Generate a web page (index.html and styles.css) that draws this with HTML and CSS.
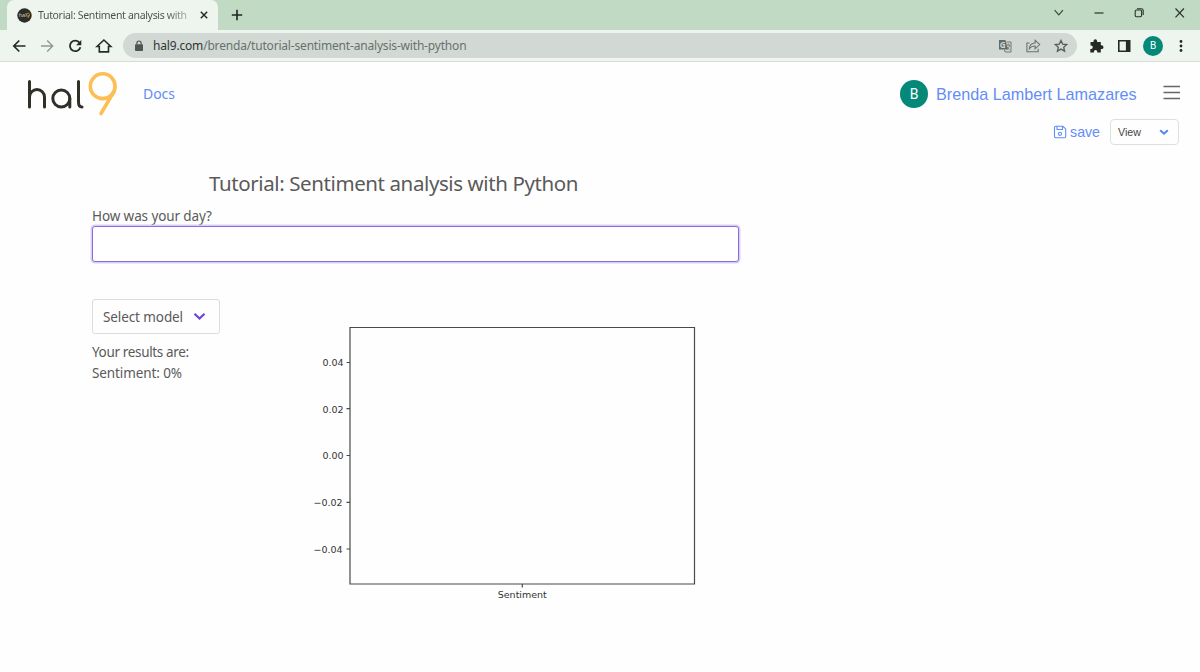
FILE: index.html
```html
<!DOCTYPE html>
<html lang="en">
<head>
<meta charset="utf-8">
<title>Tutorial: Sentiment analysis with Python</title>
<link rel="stylesheet" href="styles.css">
</head>
<body>
<div class="tabbar">
  <div class="tab">
    <svg class="favicon" width="15" height="15" viewBox="0 0 15 15"><circle cx="7.5" cy="7.5" r="7.2" fill="#2d2d26"/><text x="1.7" y="9.3" font-size="5.5" fill="#c8c8c0">hal</text><circle cx="11" cy="6.7" r="1.5" fill="none" stroke="#c99a45" stroke-width=".8"/><path d="M12.4 7.2 11 10" stroke="#c99a45" stroke-width=".8"/></svg>
    <span class="tab-title">Tutorial: Sentiment analysis with</span>
    <svg class="tab-close" width="8" height="8" viewBox="0 0 8 8"><path d="M.8.8 7.2 7.2M7.2.8.8 7.2" stroke="#262b28" stroke-width="1.5"/></svg>
  </div>
  <svg class="newtab" width="12" height="12" viewBox="0 0 12 12"><path d="M6 .8v10.4M.8 6h10.4" stroke="#202622" stroke-width="1.6"/></svg>
  <div class="window">
    <svg width="40" height="26" viewBox="0 0 40 26"><path d="m14.600 10.200 4.200 4.600 4.200-4.600" fill="none" stroke="#39453c" stroke-width="1.200"/></svg>
    <svg width="40" height="26" viewBox="0 0 40 26"><path d="M14.500 13h9" stroke="#29332c" stroke-width="1.200"/></svg>
    <svg width="40" height="26" viewBox="0 0 40 26"><g fill="none" stroke="#29332c" stroke-width="1.100"><rect x="15.200" y="10" width="6.400" height="6.700" rx="1.200"/><path d="M17 8.700h4.300q1.900 0 1.900 1.900v4.300"/></g></svg>
    <svg width="40" height="26" viewBox="0 0 40 26"><path d="m15.500 8.500 8.400 8.800m0-8.800-8.400 8.800" stroke="#29332c" stroke-width="1.200"/></svg>
  </div>
</div>
<div class="toolbar">
  <svg width="28" height="28" viewBox="0 0 28 28"><path d="M20.500 14H9.300M14.300 8.500 8.800 14l5.500 5.500" fill="none" stroke="#252a27" stroke-width="1.700"/></svg>
  <svg width="28" height="28" viewBox="0 0 28 28"><path d="M8 14h11.200M14.200 8.500l5.500 5.500-5.500 5.500" fill="none" stroke="#909893" stroke-width="1.400"/></svg>
  <svg width="28" height="28" viewBox="0 0 28 28"><path d="M18.600 10.800A5.300 5.300 0 1 0 19.400 15.200" fill="none" stroke="#252a27" stroke-width="1.800"/><path d="M20.300 8v5.200h-5.200z" fill="#252a27"/></svg>
  <svg width="30" height="28" viewBox="0 0 30 28"><path d="M8 14.500 14.900 8l6.900 6.500H19.500v5.400h-9.200v-5.400z" fill="none" stroke="#252a27" stroke-width="1.600"/></svg>
  <div class="address">
    <svg width="10" height="12" viewBox="0 0 10 12"><rect x="1" y="4.300" width="8" height="6.700" rx=".8" fill="#505653"/><path d="M2.900 4.600V3.100a2.100 2.100 0 0 1 4.200 0v1.500" fill="none" stroke="#505653" stroke-width="1.200"/></svg>
    <span class="url"><b>hal9.com</b>/brenda/tutorial-sentiment-analysis-with-python</span>
    <div class="address-actions">
      <svg width="28" height="24" viewBox="0 0 28 24"><path d="M8 6h6.500l2.500 9.500H8z" fill="#626a66"/><text x="8.700" y="13.500" font-size="8" font-weight="700" fill="#d2d9d4">G</text><path d="M15.500 8H20v10h-5.700l-1-2.500" fill="none" stroke="#707874"/><path d="M15.200 11h4M17.300 9.500V11m1.500 0q-.5 2.500-3 4.500m0-3 2.800 3.500" fill="none" stroke="#707874" stroke-width=".9"/></svg>
      <svg width="28" height="24" viewBox="0 0 28 24"><path d="M10.500 9H7.900v8.800h11.300v-3" fill="none" stroke="#6b736e" stroke-width="1.100"/><path d="M10.300 14.700q.3-5.200 5.800-5.700V6.200l4.600 4.400-4.600 4.200V12q-3.800 0-5.800 2.700z" fill="none" stroke="#6b736e" stroke-width="1.100"/></svg>
      <svg width="28" height="24" viewBox="0 0 28 24"><path d="m14 6.400 1.700 3.700 4 .4-3 2.700.9 3.900-3.600-2-3.600 2 .9-3.900-3-2.700 4-.4z" fill="none" stroke="#555e59" stroke-width="1.300"/></svg>
    </div>
  </div>
  <svg class="puzzle" width="28" height="28" viewBox="0 0 28 28"><path d="M8.500 10H11.500V9a1.800 1.800 0 0 1 3.600 0v1h3.700v3.300h.8a1.900 1.900 0 0 1 0 3.800h-.8V20.500h-3.500v-.8a1.700 1.700 0 0 0-3.400 0v.8H8.300v-3.600h.8a1.700 1.700 0 0 0 0-3.400h-.6z" fill="#252a27"/></svg>
  <svg width="28" height="28" viewBox="0 0 28 28"><path d="M8 8h12.500v12H8zM9.600 9.600v8.800h6.300V9.600z" fill="#252a27" fill-rule="evenodd"/></svg>
  <div class="profile">B</div>
  <svg width="28" height="28" viewBox="0 0 28 28"><g fill="#252a27"><circle cx="14" cy="9.500" r="1.400"/><circle cx="14" cy="14" r="1.400"/><circle cx="14" cy="18.500" r="1.400"/></g></svg>
</div>
<header class="header">
  <svg class="logo" width="92" height="46" viewBox="0 0 92 46"><g fill="none" stroke="#302f28" stroke-width="3" stroke-linecap="round"><path d="M2.500 10.500v25.500M2.500 26a7.500 7.500 0 0 1 15 0v10"/><circle cx="34.300" cy="27.500" r="8.500"/><path d="M42.800 27.500V36M51.500 10.500v20.500q0 5 3.500 5"/></g><g fill="none" stroke="#fdbf55" stroke-width="3.600" stroke-linecap="round"><circle cx="75.700" cy="15.200" r="12.400"/><path d="M87 20.500 74 42.500"/></g></svg>
  <a class="docs">Docs</a>
  <div class="avatar">B</div>
  <a class="user">Brenda Lambert Lamazares</a>
  <svg class="menu" width="17" height="15" viewBox="0 0 17 15"><path d="M.5 1.500H17M.5 7.500H17M.5 13.500H17" stroke="#666" stroke-width="1.300"/></svg>
</header>
<div class="actions">
  <svg width="14" height="14" viewBox="0 0 14 14"><g fill="none" stroke="#5f8ff5" stroke-width="1.100"><path d="M1.500 2.500q0-1.200 1.200-1.200h7.200l2.800 2.600v7.600q0 1.200-1.200 1.200H2.700q-1.200 0-1.200-1.200zM4 1.300v3.200h5.500V1.300"/><circle cx="7" cy="8.800" r="1.600"/></g></svg>
  <a class="save">save</a>
  <div class="view"><span class="view-label">View</span><svg width="10" height="7" viewBox="0 0 10 7"><path d="m1.200 1.300 3.800 3.400 3.800-3.400" fill="none" stroke="#4f86f7" stroke-width="2"/></svg></div>
</div>
<main class="content">
  <h1 class="title">Tutorial: Sentiment analysis with Python</h1>
  <label class="question" for="day">How was your day?</label>
  <input class="field" id="day" type="text">
  <div class="results">
    <div class="side">
      <div class="select"><span>Select model</span><svg width="13" height="9" viewBox="0 0 13 9"><path d="m1.500 1.800 5 4.700 5-4.700" fill="none" stroke="#6c43dc" stroke-width="2.200"/></svg></div>
      <p class="output"><span class="heading">Your results are:</span><br>Sentiment: 0%</p>
    </div>
    <svg class="chart" width="390" height="280" viewBox="310 323 390 280">
      <path d="M350 327.500h344.500V584H350zM346.500 362.500h3.500M346.500 408.700h3.500M346.500 455.500h3.500M346.500 502.300h3.500M346.500 549h3.500M522.300 584v3.500" fill="none" stroke="#454b48" stroke-width="1.200"/>
      <g class="ticks" text-anchor="end"><text x="343.600" y="366">0.04</text><text x="343.600" y="412.500">0.02</text><text x="343.600" y="459.200">0.00</text><text x="342.600" y="506">−0.02</text><text x="342.600" y="552.500">−0.04</text></g>
      <text class="ticks" x="522.300" y="598" text-anchor="middle">Sentiment</text>
    </svg>
  </div>
</main>
</body>
</html>
```
FILE: styles.css
```css
* { box-sizing: border-box; }
body { margin: 0; width: 1200px; height: 672px; overflow: hidden; background: #fefefe; font-family: "Noto Sans", "Open Sans", sans-serif; color: #5a5a5a; }
svg { display: block; flex: none; }
.tabbar { display: flex; height: 30px; padding-left: 7px; background: #c0dac3; }
.tab { display: flex; align-items: center; width: 211px; padding-left: 10px; background: #eef5ee; border-radius: 7px 7px 0 0; }
.tab-title { width: 150px; margin-left: 6px; font: 10.500px/16px "Noto Sans", sans-serif; letter-spacing: -.33px; white-space: nowrap; background: linear-gradient(90deg, #46504a 85%, #aab4ad); -webkit-background-clip: text; background-clip: text; color: transparent; }
.tab-close { margin-left: 12px; }
.newtab { margin: 9px 0 0 13px; }
.window { display: flex; margin-left: auto; }
.toolbar { display: flex; align-items: center; height: 32px; padding-left: 5px; background: #eef5ee; border-bottom: 1px solid #d5ddd6; }
.address { display: flex; align-items: center; width: 954px; height: 25px; margin-left: 4px; padding-left: 11px; border-radius: 13px; background: #d2d9d4; }
.url { margin-left: 9px; font-size: 12px; letter-spacing: -.18px; color: #68716c; white-space: nowrap; }
.url b { font-weight: 400; color: #303633; }
.address-actions { display: flex; margin-left: auto; padding-right: 2px; }
.puzzle { margin-left: 5px; }
.profile { display: flex; align-items: center; justify-content: center; width: 20px; height: 20px; margin: 0 4px 0 5px; border-radius: 50%; background: #048978; color: #fff; font: 10px Roboto, sans-serif; }
.header { display: flex; align-items: center; height: 57px; padding: 6px 20px 0 27px; }
.logo { margin-top: 1px; }
.docs, .user, .save { color: #648df7; }
.docs { margin: -1px 0 0 24px; font-size: 14px; letter-spacing: -.05px; }
.avatar { display: flex; align-items: center; justify-content: center; width: 28px; height: 28px; margin: 1px 8px 0 auto; border-radius: 50%; background: #048978; color: #fff; font: 14px Roboto, sans-serif; }
.user { width: 200px; font: 16.200px/20px "Liberation Sans", sans-serif; white-space: nowrap; }
.menu { margin: -3px 0 0 27px; }
.actions { display: flex; align-items: center; justify-content: flex-end; height: 26px; padding-right: 21px; }
.save { margin: -1px 10px 0 3px; font: 14.200px/20px "Liberation Sans", sans-serif; }
.view { display: flex; align-items: center; justify-content: space-between; width: 69px; height: 26px; padding: 0 9px 0 7px; border: 1px solid #dce1de; border-radius: 4px; color: #444; }
.view-label { font: 10.700px/14px "Liberation Sans", sans-serif; margin-top: -1px; }
.content { display: flex; flex-direction: column; padding: 22px 0 0 92px; }
.title { margin: 0 0 0 117px; font-size: 20.500px; letter-spacing: -.4px; line-height: 32px; font-weight: 400; white-space: nowrap; }
.question { margin-top: 7px; font-size: 13.500px; letter-spacing: -.1px; line-height: 20px; }
.field { width: 647px; height: 36px; border: 1px solid #8b6be0; border-radius: 3px; background: #fff; box-shadow: 0 0 0 1.500px #d9cff5; outline: none; }
.results { display: flex; margin-top: 37px; }
.side { width: 218px; }
.select { display: flex; align-items: center; justify-content: space-between; width: 128px; height: 35px; padding: 0 13px 0 10px; border: 1px solid #dcdcdf; border-radius: 3px; font-size: 13.500px; letter-spacing: -.1px; }
.output { margin: 8px 0 0; font-size: 13.500px; letter-spacing: -.1px; line-height: 21px; }
.heading { letter-spacing: -.35px; }
.chart { margin-top: 24px; }
.ticks { font: 9.500px "DejaVu Sans", sans-serif; fill: #333; }
```
